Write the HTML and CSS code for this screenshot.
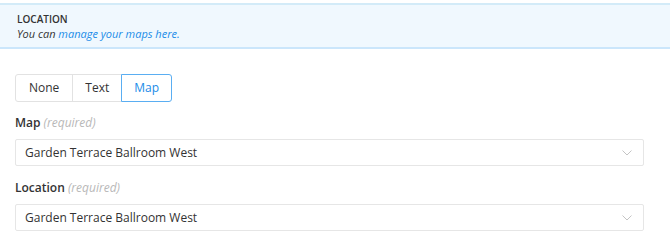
FILE: index.html
```html
<!DOCTYPE html>
<html>
<head>
<meta charset="utf-8">
<link rel="stylesheet" href="styles.css">
</head>
<body>
<div class="banner">
  <div class="banner-title">LOCATION</div>
  <div class="banner-text">You can <a href="#">manage your maps here.</a></div>
</div>
<div class="content">
  <div class="seg">
    <button class="seg-btn">None</button>
    <button class="seg-btn">Text</button>
    <button class="seg-btn active">Map</button>
  </div>
  <div class="field">
    <div class="label">Map <span class="req">(required)</span></div>
    <div class="select">
      <span>Garden Terrace Ballroom West</span>
      <svg class="chev" width="10" height="6" viewBox="0 0 10 6"><path d="M0.5 0.5 L5 5 L9.5 0.5" fill="none" stroke="#c4c4c4" stroke-width="1"/></svg>
    </div>
  </div>
  <div class="field">
    <div class="label">Location <span class="req">(required)</span></div>
    <div class="select">
      <span>Garden Terrace Ballroom West</span>
      <svg class="chev" width="10" height="6" viewBox="0 0 10 6"><path d="M0.5 0.5 L5 5 L9.5 0.5" fill="none" stroke="#c4c4c4" stroke-width="1"/></svg>
    </div>
  </div>
</div>
</body>
</html>
```
FILE: styles.css
```css
* { box-sizing: border-box; }
html, body { margin: 0; padding: 0; background: #fff; }
body {
  font-family: "Open Sans", "Liberation Sans", sans-serif;
  color: #333;
  padding-top: 3px;
}
.banner {
  background: #f0f8fe;
  border-top: 2px solid #d3ebf8;
  border-bottom: 2px solid #cbe6fb;
  padding: 8px 17px 5px;
}
.banner-title {
  font-size: 10px;
  font-weight: 600;
  line-height: 13px;
  color: #333;
}
.banner-text {
  font-size: 11px;
  font-style: italic;
  line-height: 16px;
  color: #333;
}
.banner-text a { color: #1a8ce8; text-decoration: none; }
.content {
  padding: 25px 26px 0 15px;
}
.seg {
  display: inline-flex;
}
.seg-btn {
  font-family: inherit;
  font-size: 12px;
  color: #333;
  background: #fff;
  border: 1px solid #e2e2e2;
  height: 28px;
  padding: 0 12px;
  margin: 0;
  margin-left: -1px;
  line-height: 26px;
}
.seg-btn:first-child { margin-left: 0; border-radius: 3px 0 0 3px; padding: 0 13px; }
.seg-btn:last-child { border-radius: 0 3px 3px 0; padding: 0 12px; }
.seg-btn.active {
  border-color: #5aaef2;
  color: #1a8ce8;
  position: relative;
}
.field { margin-top: 13px; }
.field + .field { margin-top: 14px; }
.label {
  font-size: 12px;
  font-weight: 600;
  line-height: 16px;
  color: #333;
  margin-bottom: 8px;
}
.req {
  font-weight: 400;
  font-style: italic;
  color: #b8b8b8;
  font-size: 12px;
}
.select {
  height: 27px;
  border: 1px solid #e6e6e6;
  border-radius: 2px;
  display: flex;
  align-items: center;
  justify-content: space-between;
  padding: 0 10px 0 9px;
  font-size: 12px;
  color: #333;
}
.chev { margin-right: 1px; }
```
